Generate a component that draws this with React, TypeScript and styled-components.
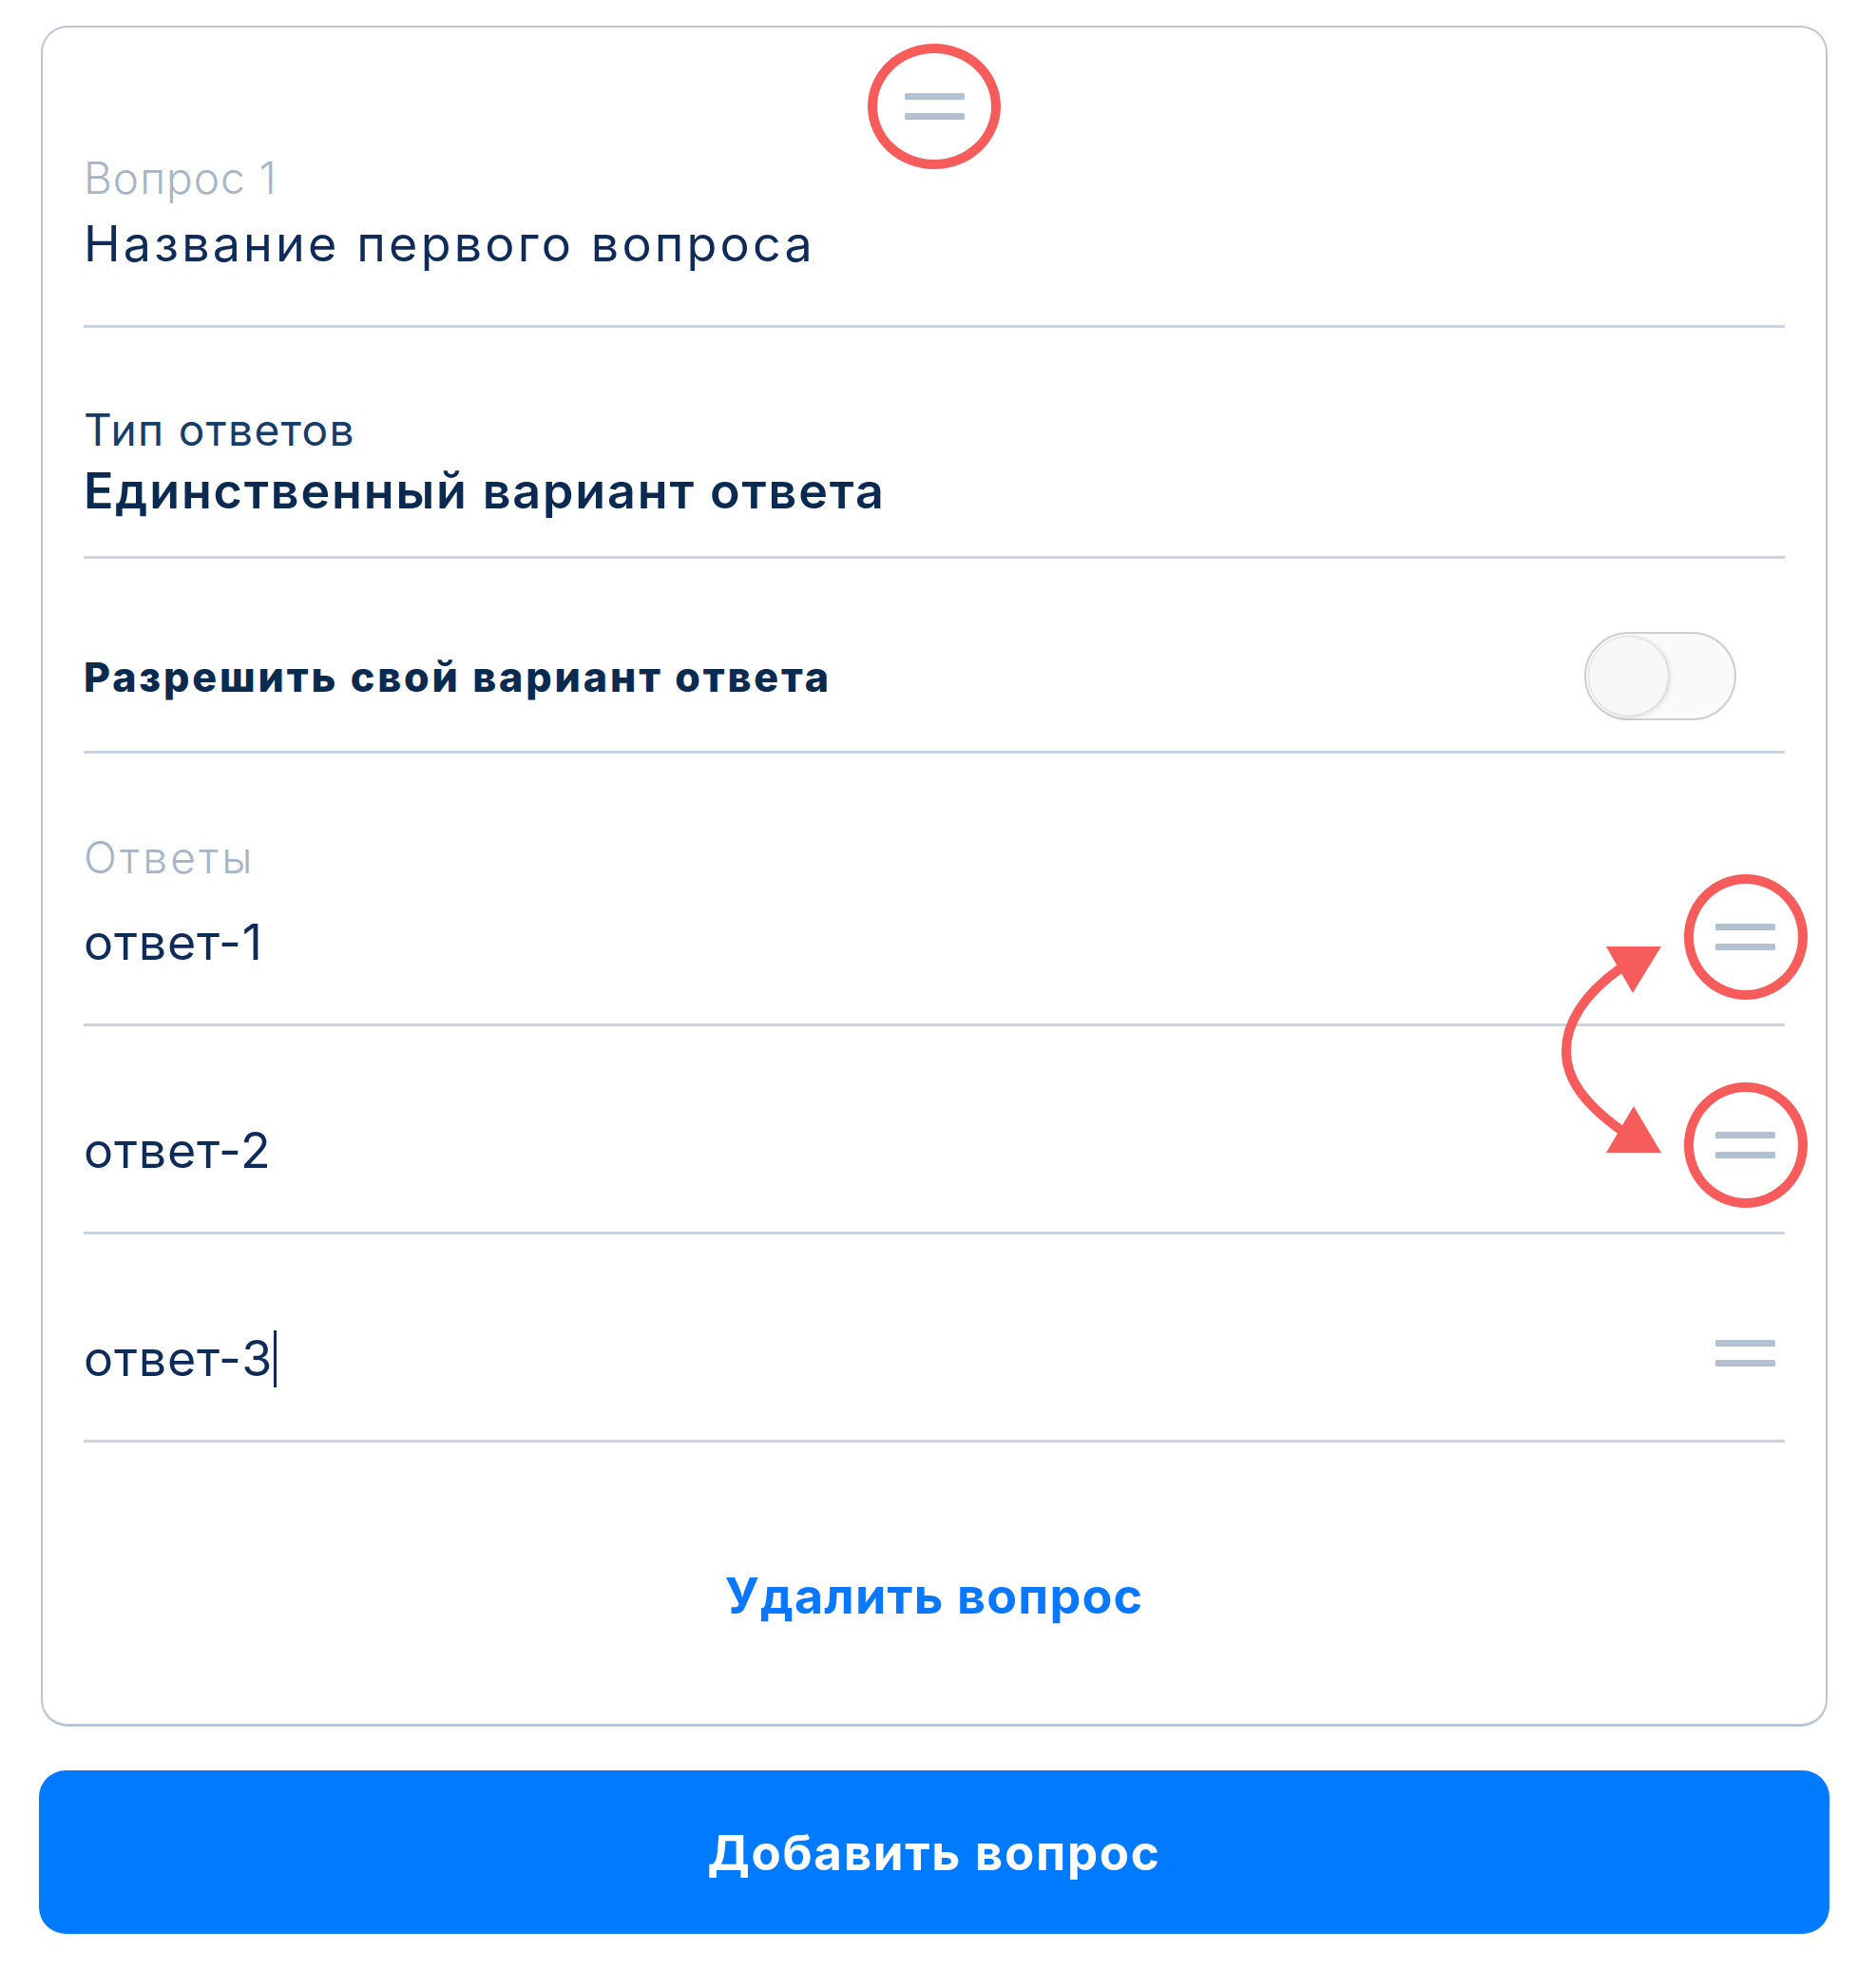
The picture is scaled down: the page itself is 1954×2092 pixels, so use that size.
import React from "react";
import styled, { createGlobalStyle } from "styled-components";

const GlobalStyle = createGlobalStyle`
  html, body {
    margin: 0;
    padding: 0;
    background: #fff;
  }
  body {
    font-family: Inter, "Noto Sans", sans-serif;
    -webkit-font-smoothing: antialiased;
  }
`;

const answers = ["ответ-1", "ответ-2", "ответ-3"];

function Grip() {
  return (
    <svg width="63" height="28" viewBox="0 0 63 28">
      <rect x="0" y="0" width="63" height="7" rx="1.5" fill="#b2c1d0" />
      <rect x="0" y="21" width="63" height="7" rx="1.5" fill="#b2c1d0" />
    </svg>
  );
}

function SwapArrow() {
  return (
    <ArrowSvg width="130" height="240" viewBox="0 0 130 240">
      <path
        d="M78 32 C34 62 18 94 18 121 C18 150 36 176 78 206"
        fill="none"
        stroke="#f65c5c"
        strokeWidth="10"
      />
      <polygon points="60,11 118,11 88,60" fill="#f65c5c" />
      <polygon points="89,179 60,228 118,228" fill="#f65c5c" />
    </ArrowSvg>
  );
}

function App() {
  return (
    <Page>
      <GlobalStyle />
      <Card>
        <HandleRow>
          <HandleSpot>
            <Grip />
            <Ring $w={140} $h={132} />
          </HandleSpot>
        </HandleRow>

        <Section $top={33} $bottom={53}>
          <MutedLabel $spacing={1}>Вопрос 1</MutedLabel>
          <TitleText>Название первого вопроса</TitleText>
        </Section>

        <Section $top={79} $bottom={36}>
          <FieldLabel>Тип ответов</FieldLabel>
          <TypeValue>Единственный вариант ответа</TypeValue>
        </Section>

        <SwitchRow>
          <SwitchLabel>Разрешить свой вариант ответа</SwitchLabel>
          <Toggle>
            <Knob />
          </Toggle>
        </SwitchRow>

        <AnswersBlock>
          <MutedLabel $spacing={3.2}>Ответы</MutedLabel>
          <AnswerList>
            {answers.map((a, i) => (
              <AnswerRow key={a} $first={i === 0}>
                <AnswerText>
                  {a}
                  {i === answers.length - 1 && <Caret />}
                </AnswerText>
                <HandleSpot $row>
                  <Grip />
                  {i < 2 && <Ring $w={130} $h={132} />}
                </HandleSpot>
              </AnswerRow>
            ))}
            <SwapArrow />
          </AnswerList>
        </AnswersBlock>

        <DeleteLink>Удалить вопрос</DeleteLink>
      </Card>

      <AddButton>Добавить вопрос</AddButton>
    </Page>
  );
}

export default App;

const Page = styled.div`
  width: 1884px;
  margin-left: 41px;
  padding-top: 27px;
  padding-bottom: 56px;
`;

const Card = styled.div`
  margin: 0 2px;
  border: 2px solid #bac6d6;
  border-bottom-width: 3px;
  border-radius: 28px;
  padding: 0 43px 102px;
`;

const HandleRow = styled.div`
  display: flex;
  justify-content: center;
  padding-top: 69px;
`;

const HandleSpot = styled.div<{ $row?: boolean }>`
  position: relative;
  display: flex;
  margin-right: ${(p) => (p.$row ? "10px" : "0")};
  margin-bottom: ${(p) => (p.$row ? "12px" : "0")};
`;

const Ring = styled.span<{ $w: number; $h: number }>`
  position: absolute;
  left: 50%;
  top: 50%;
  width: ${(p) => p.$w}px;
  height: ${(p) => p.$h}px;
  transform: translate(-50%, -50%);
  box-sizing: border-box;
  border: 10px solid #f65c5c;
  border-radius: 50%;
  pointer-events: none;
`;

const Section = styled.div<{ $top: number; $bottom: number }>`
  padding-top: ${(p) => p.$top}px;
  padding-bottom: ${(p) => p.$bottom}px;
  border-bottom: 3px solid #c9d3e1;
`;

const MutedLabel = styled.div<{ $spacing: number }>`
  font-size: 46px;
  line-height: 56px;
  font-weight: 300;
  color: #a6b5c8;
  letter-spacing: ${(p) => p.$spacing}px;
`;

const TitleText = styled.div`
  margin-top: 10px;
  font-size: 52px;
  line-height: 64px;
  font-weight: 400;
  color: #0f2c58;
  letter-spacing: 3.2px;
`;

const FieldLabel = styled.div`
  font-size: 46px;
  line-height: 56px;
  font-weight: 400;
  color: #163d69;
  letter-spacing: 1.35px;
`;

const TypeValue = styled.div`
  margin-top: 5px;
  font-size: 52px;
  line-height: 64px;
  font-weight: 600;
  color: #0b2a52;
  letter-spacing: 1.85px;
`;

const SwitchRow = styled.div`
  display: flex;
  align-items: center;
  justify-content: space-between;
  padding: 77px 51px 32px 0;
  border-bottom: 3px solid #c9d3e1;
`;

const SwitchLabel = styled.div`
  padding-top: 1px;
  font-size: 43px;
  line-height: 52px;
  font-weight: 800;
  color: #0b2a4f;
  letter-spacing: 2.9px;
`;

const Toggle = styled.div`
  box-sizing: border-box;
  width: 160px;
  height: 93px;
  padding: 2px;
  border: 2px solid #cfcfcf;
  border-radius: 47px;
  background: #fafafa;
  display: flex;
  align-items: center;
`;

const Knob = styled.div`
  width: 85px;
  height: 85px;
  border-radius: 50%;
  background: #f7f7f7;
  border: 1px solid #dcdcdc;
  box-sizing: border-box;
  box-shadow: 2px 1px 4px rgba(0, 0, 0, 0.12);
`;

const AnswersBlock = styled.div`
  padding-top: 81px;
`;

const AnswerList = styled.div`
  position: relative;
`;

const AnswerRow = styled.div<{ $first: boolean }>`
  display: flex;
  align-items: center;
  justify-content: space-between;
  padding-top: ${(p) => (p.$first ? "32px" : "101px")};
  padding-bottom: 55px;
  border-bottom: 3px solid #c9d3e1;
`;

const AnswerText = styled.div`
  font-size: 52px;
  line-height: 60px;
  font-weight: 400;
  color: #0f2c58;
  letter-spacing: 0.8px;
`;

const Caret = styled.span`
  display: inline-block;
  width: 3px;
  height: 60px;
  margin-left: 1px;
  vertical-align: -12px;
  background: #0f2c58;
`;

const ArrowSvg = styled.svg`
  position: absolute;
  left: 1542px;
  top: 55px;
  pointer-events: none;
`;

const DeleteLink = styled.div`
  padding-top: 130px;
  text-align: center;
  font-size: 52px;
  line-height: 64px;
  font-weight: 700;
  color: #0a77ff;
  letter-spacing: 1.2px;
`;

const AddButton = styled.button`
  display: flex;
  align-items: center;
  justify-content: center;
  width: 100%;
  height: 172px;
  margin-top: 46px;
  border: none;
  border-radius: 28px;
  background: #007bff;
  color: #fff;
  font-family: Inter, "Noto Sans", sans-serif;
  font-size: 51px;
  font-weight: 700;
  letter-spacing: 1.7px;
`;
